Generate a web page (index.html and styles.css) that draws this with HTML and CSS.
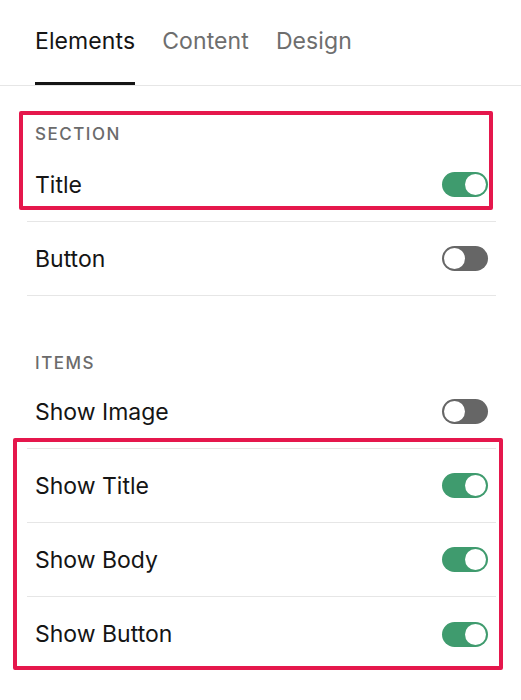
FILE: index.html
```html
<!DOCTYPE html>
<html lang="en">
<head>
    <meta charset="UTF-8">
    <meta name="viewport" content="width=device-width, initial-scale=1.0">
    <title>Elements</title>
    <link rel="stylesheet" href="styles.css">
</head>
<body>
    <div class="tabs">
        <div class="tab active">Elements</div>
        <div class="tab">Content</div>
        <div class="tab">Design</div>
    </div>
    <div class="panel">
        <div class="label label-section">SECTION</div>
        <div class="list">
            <div class="row"><span>Title</span><span class="toggle on"></span></div>
            <div class="row"><span>Button</span><span class="toggle"></span></div>
        </div>
        <div class="label label-items">ITEMS</div>
        <div class="list">
            <div class="row"><span>Show Image</span><span class="toggle"></span></div>
            <div class="row"><span>Show Title</span><span class="toggle on"></span></div>
            <div class="row"><span>Show Body</span><span class="toggle on"></span></div>
            <div class="row last"><span>Show Button</span><span class="toggle on"></span></div>
        </div>
        <!-- 红框标注 -->
        <div class="mark mark1"></div>
        <div class="mark mark2"></div>
    </div>
</body>
</html>
```

FILE: styles.css
```css
*{
    padding: 0;
    margin: 0;
    box-sizing: border-box;
}
body{
    background: #fff;
    font-family: Inter, "Liberation Sans", sans-serif;
    color: #151515;
}
.tabs{
    display: flex;
    gap: 27px;
    height: 86px;
    padding-left: 35px;
    border-bottom: 1px solid #e6e6e6;
}
.tab{
    font-size: 23px;
    line-height: 28px;
    padding-top: 27px;
    letter-spacing: 0.1px;
    color: #6e6e6e;
}
.tab.active{
    color: #151515;
    border-bottom: 3px solid #151515;
}
.panel{
    position: relative;
}
.label{
    font-size: 17px;
    font-weight: 500;
    line-height: 20px;
    letter-spacing: 1.5px;
    color: #6b6b6b;
    padding-left: 35px;
}
.label-section{
    padding-top: 38px;
    height: 62px;
}
.label-items{
    padding-top: 57px;
    height: 79px;
}
.list{
    margin: 0 25px 0 27px;
}
.row{
    display: flex;
    align-items: center;
    justify-content: space-between;
    height: 74px;
    padding: 0 8px;
    border-bottom: 1px solid #e6e6e6;
    font-size: 23px;
}
.row.last{
    border-bottom: none;
}
.toggle{
    position: relative;
    width: 46px;
    height: 25px;
    border-radius: 13px;
    background: #666;
}
.toggle::after{
    content: "";
    position: absolute;
    top: 2px;
    left: 2px;
    width: 21px;
    height: 21px;
    border-radius: 50%;
    background: #fff;
}
.toggle.on{
    background: #3f9b6e;
}
.toggle.on::after{
    left: 23px;
}
.mark{
    position: absolute;
    border: 4px solid #e5174c;
    border-radius: 2px;
}
.mark1{
    left: 19px;
    top: 25px;
    width: 474px;
    height: 99px;
}
.mark2{
    left: 13px;
    top: 352px;
    width: 490px;
    height: 232px;
}
```
